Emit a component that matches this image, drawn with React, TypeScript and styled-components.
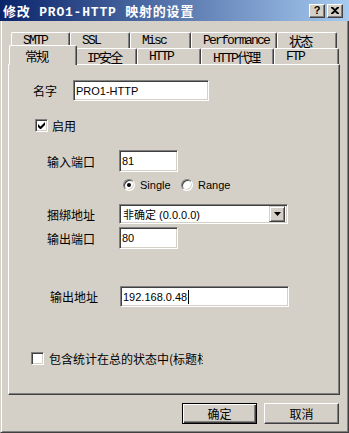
import styled, { createGlobalStyle } from "styled-components";

const CJK = `"Noto Sans CJK SC", sans-serif`;
const UI = `"Liberation Sans", "Noto Sans CJK SC", sans-serif`;
const MONO = `"Liberation Mono", "Noto Sans CJK SC", monospace`;

const GlobalStyle = createGlobalStyle`
  html, body {
    margin: 0;
    padding: 0;
    background: #d4d0c8;
  }
  * {
    box-sizing: border-box;
  }
`;

const Window = styled.div`
  width: 349px;
  height: 433px;
  display: flex;
  flex-direction: column;
  background: #d4d0c8;
  overflow: hidden;
`;

const TitleBar = styled.div`
  height: 21px;
  flex: none;
  display: flex;
  align-items: center;
  padding: 0 6px 0 3px;
  background: linear-gradient(to right, #0a246a, #a6caf0);
`;

const TitleText = styled.div`
  flex: 1;
  color: #fff;
  font: bold 13px ${MONO};
  letter-spacing: 0.8px;
  white-space: nowrap;
`;

const CaptionButton = styled.div<{ $gap?: number }>`
  width: 16px;
  height: 14px;
  margin-left: ${({ $gap }) => $gap ?? 0}px;
  display: flex;
  align-items: center;
  justify-content: center;
  background: #d4d0c8;
  border: 1px solid;
  border-color: #fff #404040 #404040 #fff;
  box-shadow: inset -1px -1px #808080;
  font: bold 11px "Liberation Sans", sans-serif;
  color: #000;
  line-height: 1;
`;

const Frame = styled.div`
  flex: 1;
  display: flex;
  flex-direction: column;
  border: 1px solid;
  border-top: none;
  border-color: #d4d0c8 #404040 #404040 #d4d0c8;
  box-shadow: inset 1px 0 #fff, inset -1px -1px #808080;
  padding: 11px 8px 8px 7px;
`;

const TabRow = styled.div`
  display: flex;
  align-items: flex-start;
  height: 16px;
  padding-left: 3px;
`;

const Tab = styled.div<{ $w: number; $active?: boolean }>`
  width: ${({ $w }) => $w}px;
  height: ${({ $active }) => ($active ? 20 : 16)}px;
  margin: ${({ $active }) => ($active ? "-3px -2px -1px" : "0")};
  position: ${({ $active }) => ($active ? "relative" : "static")};
  z-index: ${({ $active }) => ($active ? 1 : "auto")};
  flex: none;
  display: flex;
  align-items: center;
  padding: ${({ $active }) => ($active ? "0 0 1px 15px" : "0 0 0 11px")};
  background: #d4d0c8;
  border-top: 1px solid #fff;
  border-left: 1px solid #fff;
  border-right: 1px solid #404040;
  border-radius: 2px 2px 0 0;
  box-shadow: inset -1px 0 #808080;
  font: 13px ${MONO};
  letter-spacing: -1.8px;
  color: #000;
  white-space: nowrap;
`;

const Panel = styled.div`
  height: 331px;
  flex: none;
  display: flex;
  flex-direction: column;
  border: 1px solid;
  border-color: #fff #404040 #404040 #fff;
  box-shadow: inset -1px -1px #808080;
`;

const FieldRow = styled.div<{ $top: number; $left: number }>`
  display: flex;
  align-items: center;
  margin-top: ${({ $top }) => $top}px;
  padding-left: ${({ $left }) => $left}px;
`;

const Label = styled.div<{ $w: number }>`
  width: ${({ $w }) => $w}px;
  flex: none;
  font: 12px ${CJK};
  color: #000;
  white-space: nowrap;
`;

const TextField = styled.div<{ $w: number; $h?: number }>`
  width: ${({ $w }) => $w}px;
  height: ${({ $h }) => $h ?? 21}px;
  flex: none;
  display: flex;
  align-items: center;
  padding-left: 2px;
  background: #fff;
  border: 1px solid;
  border-color: #808080 #fff #fff #808080;
  box-shadow: inset 1px 1px #404040, inset -1px -1px #d4d0c8;
  font: 11px ${UI};
  color: #000;
  white-space: nowrap;
`;

const Caret = styled.span`
  display: inline-block;
  width: 1px;
  height: 14px;
  margin-left: 1px;
  background: #000;
`;

const CheckRow = styled.div<{ $top: number; $left: number; $gap: number }>`
  display: flex;
  align-items: center;
  gap: ${({ $gap }) => $gap}px;
  margin-top: ${({ $top }) => $top}px;
  padding-left: ${({ $left }) => $left}px;
`;

const CheckBox = styled.div`
  width: 13px;
  height: 13px;
  flex: none;
  display: flex;
  align-items: center;
  justify-content: center;
  background: #fff;
  border: 1px solid;
  border-color: #808080 #fff #fff #808080;
  box-shadow: inset 1px 1px #404040, inset -1px -1px #d4d0c8;
`;

const CheckText = styled.div<{ $clip?: number }>`
  font: 12px ${CJK};
  color: #000;
  white-space: nowrap;
  overflow: hidden;
  ${({ $clip }) => ($clip ? `width: ${$clip}px;` : "")}
`;

const RadioGroup = styled.div`
  display: flex;
  align-items: center;
  margin-top: 6px;
  padding-left: 114px;
  height: 13px;
`;

const Radio = styled.div<{ $on?: boolean }>`
  width: 12px;
  height: 12px;
  flex: none;
  display: flex;
  align-items: center;
  justify-content: center;
  border-radius: 50%;
  background: #fff;
  border: 1px solid;
  border-color: #808080 #fff #fff #808080;
  box-shadow: inset 1px 1px #404040, inset -1px -1px #d4d0c8;
  &::after {
    content: "";
    width: 4px;
    height: 4px;
    border-radius: 50%;
    background: ${({ $on }) => ($on ? "#000" : "transparent")};
  }
`;

const RadioText = styled.div<{ $w: number }>`
  width: ${({ $w }) => $w}px;
  padding-left: 5px;
  font: 11px ${UI};
  color: #000;
`;

const Select = styled.div`
  width: 169px;
  height: 20px;
  flex: none;
  display: flex;
  align-items: center;
  padding: 2px 2px 2px 3px;
  background: #fff;
  border: 1px solid;
  border-color: #808080 #fff #fff #808080;
  box-shadow: inset 1px 1px #404040, inset -1px -1px #d4d0c8;
`;

const SelectText = styled.div`
  flex: 1;
  font: 11px ${UI};
  color: #000;
  white-space: nowrap;
`;

const ArrowButton = styled.div`
  width: 16px;
  height: 16px;
  flex: none;
  display: flex;
  align-items: center;
  justify-content: center;
  background: #d4d0c8;
  border: 1px solid;
  border-color: #d4d0c8 #404040 #404040 #d4d0c8;
  box-shadow: inset 1px 1px #fff, inset -1px -1px #808080;
`;

const ButtonRow = styled.div`
  display: flex;
  justify-content: flex-end;
  gap: 7px;
  margin-top: 8px;
  padding-right: 1px;
`;

const Button = styled.div<{ $default?: boolean }>`
  width: 75px;
  height: 21px;
  display: flex;
  align-items: center;
  justify-content: center;
  background: #d4d0c8;
  border: 1px solid;
  border-color: ${({ $default }) =>
    $default ? "#000" : "#fff #404040 #404040 #fff"};
  box-shadow: ${({ $default }) =>
    $default
      ? "inset 1px 1px #fff, inset -1px -1px #404040, inset -2px -2px #808080"
      : "inset -1px -1px #808080"};
  font: 12px ${CJK};
  color: #000;
`;

const App = () => {
  return (
    <Window>
      <GlobalStyle />
      <TitleBar>
        <TitleText>修改 PRO1-HTTP 映射的设置</TitleText>
        <CaptionButton>?</CaptionButton>
        <CaptionButton $gap={2}>
          <svg width="8" height="7" viewBox="0 0 8 7">
            <path d="M0 0h2l2 2 2-2h2v1L5 3.5 8 6v1H6L4 5 2 7H0V6l3-2.5L0 1z" fill="#000" />
          </svg>
        </CaptionButton>
      </TitleBar>
      <Frame>
        <TabRow>
          <Tab $w={59}>SMTP</Tab>
          <Tab $w={60}>SSL</Tab>
          <Tab $w={61}>Misc</Tab>
          <Tab $w={86}>Performance</Tab>
          <Tab $w={60}>状态</Tab>
        </TabRow>
        <TabRow>
          <Tab $w={68} $active>常规</Tab>
          <Tab $w={62}>IP安全</Tab>
          <Tab $w={64}>HTTP</Tab>
          <Tab $w={73}>HTTP代理</Tab>
          <Tab $w={65}>FTP</Tab>
        </TabRow>
        <Panel>
          <FieldRow $top={15} $left={24}>
            <Label $w={40}>名字</Label>
            <TextField $w={136}>PRO1-HTTP</TextField>
          </FieldRow>
          <CheckRow $top={16} $left={26} $gap={4}>
            <CheckBox>
              <svg width="7" height="7" viewBox="0 0 7 7">
                <path d="M0 2v3l2 2h1l4-4V0L2.5 4.5z" fill="#000" />
              </svg>
            </CheckBox>
            <CheckText>启用</CheckText>
          </CheckRow>
          <FieldRow $top={16} $left={38}>
            <Label $w={72}>输入端口</Label>
            <TextField $w={59} $h={22}>81</TextField>
          </FieldRow>
          <RadioGroup>
            <Radio $on />
            <RadioText $w={46}>Single</RadioText>
            <Radio />
            <RadioText $w={50}>Range</RadioText>
          </RadioGroup>
          <FieldRow $top={13} $left={38}>
            <Label $w={72}>捆绑地址</Label>
            <Select>
              <SelectText>非确定 (0.0.0.0)</SelectText>
              <ArrowButton>
                <svg width="7" height="4" viewBox="0 0 7 4">
                  <path d="M0 0h7L3.5 4z" fill="#000" />
                </svg>
              </ArrowButton>
            </Select>
          </FieldRow>
          <FieldRow $top={3} $left={38}>
            <Label $w={72}>输出端口</Label>
            <TextField $w={59} $h={22}>80</TextField>
          </FieldRow>
          <FieldRow $top={37} $left={41}>
            <Label $w={70}>输出地址</Label>
            <TextField $w={169}>
              192.168.0.48
              <Caret />
            </TextField>
          </FieldRow>
          <CheckRow $top={43} $left={22} $gap={5}>
            <CheckBox />
            <CheckText $clip={154}>包含统计在总的状态中(标题栏</CheckText>
          </CheckRow>
        </Panel>
        <ButtonRow>
          <Button $default>确定</Button>
          <Button>取消</Button>
        </ButtonRow>
      </Frame>
    </Window>
  );
};

export default App;
